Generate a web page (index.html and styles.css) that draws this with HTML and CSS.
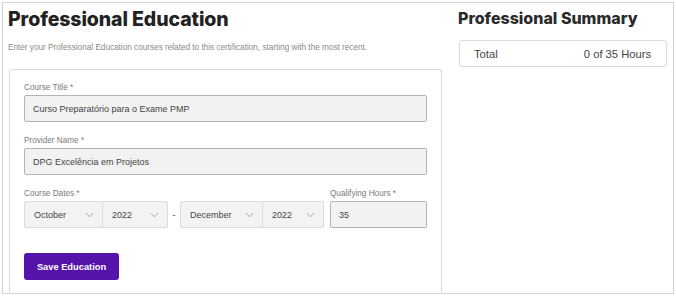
FILE: index.html
```html
<!DOCTYPE html>
<html>
<head>
<meta charset="utf-8">
<link rel="stylesheet" href="styles.css">
</head>
<body>
<div class="frame">
  <section class="main">
    <h1 class="title">Professional Education</h1>
    <p class="intro">Enter your Professional Education courses related to this certification, starting with the most recent.</p>
    <div class="card">
      <label class="label">Course Title *</label>
      <div class="input">Curso Preparatório para o Exame PMP</div>
      <label class="label">Provider Name *</label>
      <div class="input">DPG Excelência em Projetos</div>
      <div class="dates-row">
        <div class="dates">
          <label class="label">Course Dates *</label>
          <div class="selects">
            <div class="select w-month1">October<svg class="chev" viewBox="0 0 10 6"><path d="M1 1l4 4 4-4" /></svg></div>
            <div class="select w-year1">2022<svg class="chev" viewBox="0 0 10 6"><path d="M1 1l4 4 4-4" /></svg></div>
            <span class="dash">-</span>
            <div class="select w-month2">December<svg class="chev" viewBox="0 0 10 6"><path d="M1 1l4 4 4-4" /></svg></div>
            <div class="select w-year2">2022<svg class="chev" viewBox="0 0 10 6"><path d="M1 1l4 4 4-4" /></svg></div>
          </div>
        </div>
        <div class="hours">
          <label class="label">Qualifying Hours *</label>
          <div class="input small">35</div>
        </div>
      </div>
      <button class="btn">Save Education</button>
    </div>
  </section>
  <aside class="side">
    <h2 class="side-title">Professional Summary</h2>
    <div class="total">
      <span>Total</span>
      <span>0 of 35 Hours</span>
    </div>
  </aside>
</div>
</body>
</html>
```
FILE: styles.css
```css
* { box-sizing: border-box; }
html, body { margin: 0; padding: 0; background: #fff; }
body {
  font-family: "Liberation Sans", Arial, sans-serif;
  width: 676px;
  height: 297px;
  overflow: hidden;
}
.frame {
  margin: 2px 0 0 2px;
  width: 672px;
  height: 292px;
  border: 1px solid #d4d4d4;
  display: flex;
}
.main {
  width: 439px;
  padding-left: 5px;
  display: flex;
  flex-direction: column;
}
.title {
  margin: 4px 0 0 0;
  font-family: Inter, sans-serif;
  font-weight: 800;
  font-size: 19.5px;
  line-height: 24px;
  color: #222;
  letter-spacing: -0.1px;
}
.intro {
  margin: 12px 0 0 0;
  font-size: 8.2px;
  line-height: 10px;
  color: #8a8a8a;
}
.card {
  margin: 16px 0 0 1px;
  width: 433px;
  flex: 1;
  border: 1.5px solid #dadada;
  border-bottom: none;
  border-radius: 3px 3px 0 0;
  padding: 13px 14px 0 14px;
  display: flex;
  flex-direction: column;
}
.label {
  display: block;
  font-size: 8.2px;
  line-height: 9px;
  color: #7a7a7a;
  margin-bottom: 3px;
}
.input {
  height: 27px;
  border: 1.5px solid #b4b4b4;
  border-radius: 2px;
  background: #f2f2f2;
  font-size: 9px;
  color: #444;
  display: flex;
  align-items: center;
  padding-left: 8px;
  margin-bottom: 14px;
}
.dates-row {
  display: flex;
  gap: 6px;
}
.selects {
  display: flex;
  align-items: center;
}
.select {
  height: 27px;
  border: 1px solid #dcdcdc;
  background: #f3f3f3;
  font-size: 9px;
  color: #444;
  display: flex;
  align-items: center;
  justify-content: space-between;
  padding: 0 8px 0 9px;
}
.w-month1 { width: 79px; border-radius: 2px 0 0 2px; }
.w-year1 { width: 65px; border-left: none; border-radius: 0 2px 2px 0; }
.w-month2 { width: 83px; border-radius: 2px 0 0 2px; }
.w-year2 { width: 61px; border-left: none; border-radius: 0 2px 2px 0; }
.dash {
  width: 12px;
  text-align: center;
  font-size: 9px;
  color: #444;
}
.chev {
  width: 9px;
  height: 6px;
  fill: none;
  stroke: #999;
  stroke-width: 1;
}
.hours { flex: 1; }
.input.small { margin-bottom: 0; }
.btn {
  margin-top: 25px;
  width: 95px;
  height: 27px;
  border: none;
  border-radius: 3px;
  background: #5513a9;
  color: #fff;
  font-family: "Liberation Sans", Arial, sans-serif;
  font-weight: bold;
  font-size: 9.3px;
  padding: 0;
}
.side {
  padding-left: 16px;
  flex: 1;
}
.side-title {
  margin: 6px 0 0 0;
  font-family: Inter, sans-serif;
  font-weight: 800;
  font-size: 16px;
  line-height: 19px;
  color: #2a2a2a;
}
.total {
  margin: 12px 0 0 1px;
  width: 208px;
  height: 27px;
  border: 1px solid #dadada;
  border-radius: 3px;
  display: flex;
  align-items: center;
  justify-content: space-between;
  padding: 0 15px 0 14px;
  font-size: 11.2px;
  color: #444;
}
```
